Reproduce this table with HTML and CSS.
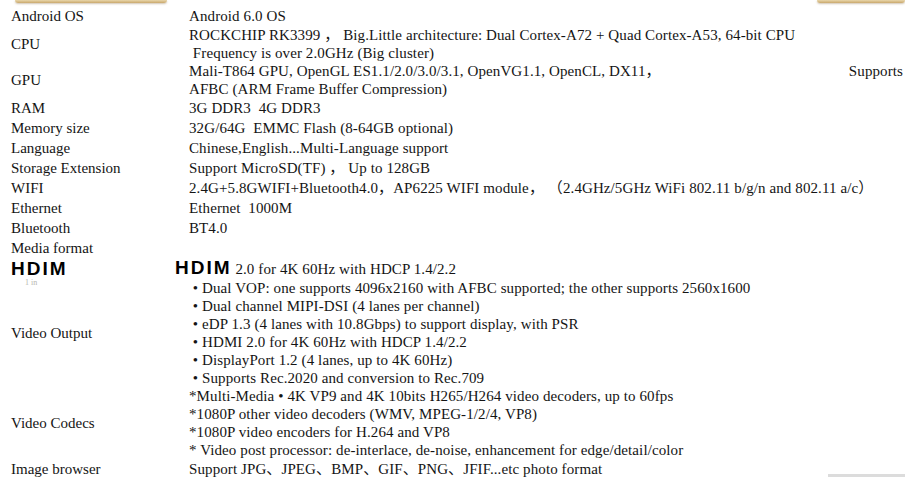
FILE: index.html
```html
<!DOCTYPE html>
<html>
  <head>
    <meta charset="utf-8">
    <link rel="stylesheet" href="styles.css">
  </head>
  <body>
    <div class="tabs">
      <div class="tab tab-left"></div>
      <div class="tab tab-right"></div>
    </div>

    <div class="specs">
      <div class="label">Android OS</div>
      <div class="value">Android 6.0 OS</div>

      <div class="label">CPU</div>
      <div class="value multi">ROCKCHIP RK3399 ， Big.Little architecture: Dual Cortex-A72 + Quad Cortex-A53, 64-bit CPU<br>&nbsp;Frequency is over 2.0GHz (Big cluster)</div>

      <div class="label">GPU</div>
      <div class="value multi">
        <div class="split"><span>Mali-T864 GPU, OpenGL ES1.1/2.0/3.0/3.1, OpenVG1.1, OpenCL, DX11，</span><span>Supports</span></div>
        AFBC (ARM Frame Buffer Compression)
      </div>

      <div class="label">RAM</div>
      <div class="value">3G DDR3&nbsp; 4G DDR3</div>

      <div class="label">Memory size</div>
      <div class="value">32G/64G&nbsp; EMMC Flash (8-64GB optional)</div>

      <div class="label">Language</div>
      <div class="value">Chinese,English...Multi-Language support</div>

      <div class="label">Storage Extension</div>
      <div class="value">Support MicroSD(TF) ， Up to 128GB</div>

      <div class="label">WIFI</div>
      <div class="value">2.4G+5.8GWIFI+Bluetooth4.0，AP6225 WIFI module， （2.4GHz/5GHz WiFi 802.11 b/g/n and 802.11 a/c）</div>

      <div class="label">Ethernet</div>
      <div class="value">Ethernet&nbsp; 1000M</div>

      <div class="label">Bluetooth</div>
      <div class="value">BT4.0</div>

      <div class="label">Media format</div>
      <div class="value"></div>

      <div class="label hdim-label"><b class="hdim">HDIM</b><span class="smudge">1 in</span></div>
      <div class="value"><b class="hdim hdim-value">HDIM</b> 2.0 for 4K 60Hz with HDCP 1.4/2.2</div>

      <div class="label">Video Output</div>
      <div class="value multi">
        &nbsp;• Dual VOP: one supports 4096x2160 with AFBC supported; the other supports 2560x1600<br>
        &nbsp;• Dual channel MIPI-DSI (4 lanes per channel)<br>
        &nbsp;• eDP 1.3 (4 lanes with 10.8Gbps) to support display, with PSR<br>
        &nbsp;• HDMI 2.0 for 4K 60Hz with HDCP 1.4/2.2<br>
        &nbsp;• DisplayPort 1.2 (4 lanes, up to 4K 60Hz)<br>
        &nbsp;• Supports Rec.2020 and conversion to Rec.709
      </div>

      <div class="label">Video Codecs</div>
      <div class="value multi">
        *Multi-Media • 4K VP9 and 4K 10bits H265/H264 video decoders, up to 60fps<br>
        *1080P other video decoders (WMV, MPEG-1/2/4, VP8)<br>
        *1080P video encoders for H.264 and VP8<br>
        * Video post processor: de-interlace, de-noise, enhancement for edge/detail/color
      </div>

      <div class="label">Image browser</div>
      <div class="value">Support JPG、JPEG、BMP、GIF、PNG、JFIF...etc photo format</div>
    </div>

    <div class="corner-bar"></div>
  </body>
</html>
```

FILE: styles.css
```css
body {
  margin: 0;
  padding: 0;
  background-color: #ffffff;
  color: #141414;
  font-family: 'Liberation Serif', 'Noto Sans CJK SC', serif;
  font-size: 15px;
  overflow: hidden;
  height: 477px;
  position: relative;
}
.tabs {
  display: flex;
  justify-content: space-between;
  height: 3px;
}
.tab {
  height: 3px;
  background: linear-gradient(#e9d6aa, #c9a86c);
  border-radius: 0 0 4px 4px;
  box-shadow: 0 1px 2px rgba(120, 90, 40, 0.35);
}
.tab-left {
  margin-left: 15px;
  width: 152px;
}
.tab-right {
  width: 88px;
}
.specs {
  display: grid;
  grid-template-columns: 178px 1fr;
  padding: 3px 0 0 11px;
}
.label {
  display: flex;
  align-items: center;
  line-height: 20px;
  white-space: nowrap;
}
.value {
  line-height: 20px;
  white-space: nowrap;
  letter-spacing: 0.1px;
}
.value.multi {
  line-height: 18px;
}
.split {
  display: flex;
  justify-content: space-between;
  width: 714px;
}
.hdim-label {
  position: relative;
}
.hdim {
  font-family: 'Liberation Sans', sans-serif;
  font-weight: 900;
  font-size: 19px;
  letter-spacing: 2px;
  color: #000;
}
.hdim-value {
  margin-left: -14px;
}
.smudge {
  position: absolute;
  left: 14px;
  top: 21px;
  font-size: 8px;
  line-height: 8px;
  color: #b8b8b0;
}
.corner-bar {
  position: absolute;
  right: 0;
  bottom: 0;
  width: 77px;
  height: 3px;
  background-color: #dcdcdc;
}
```
